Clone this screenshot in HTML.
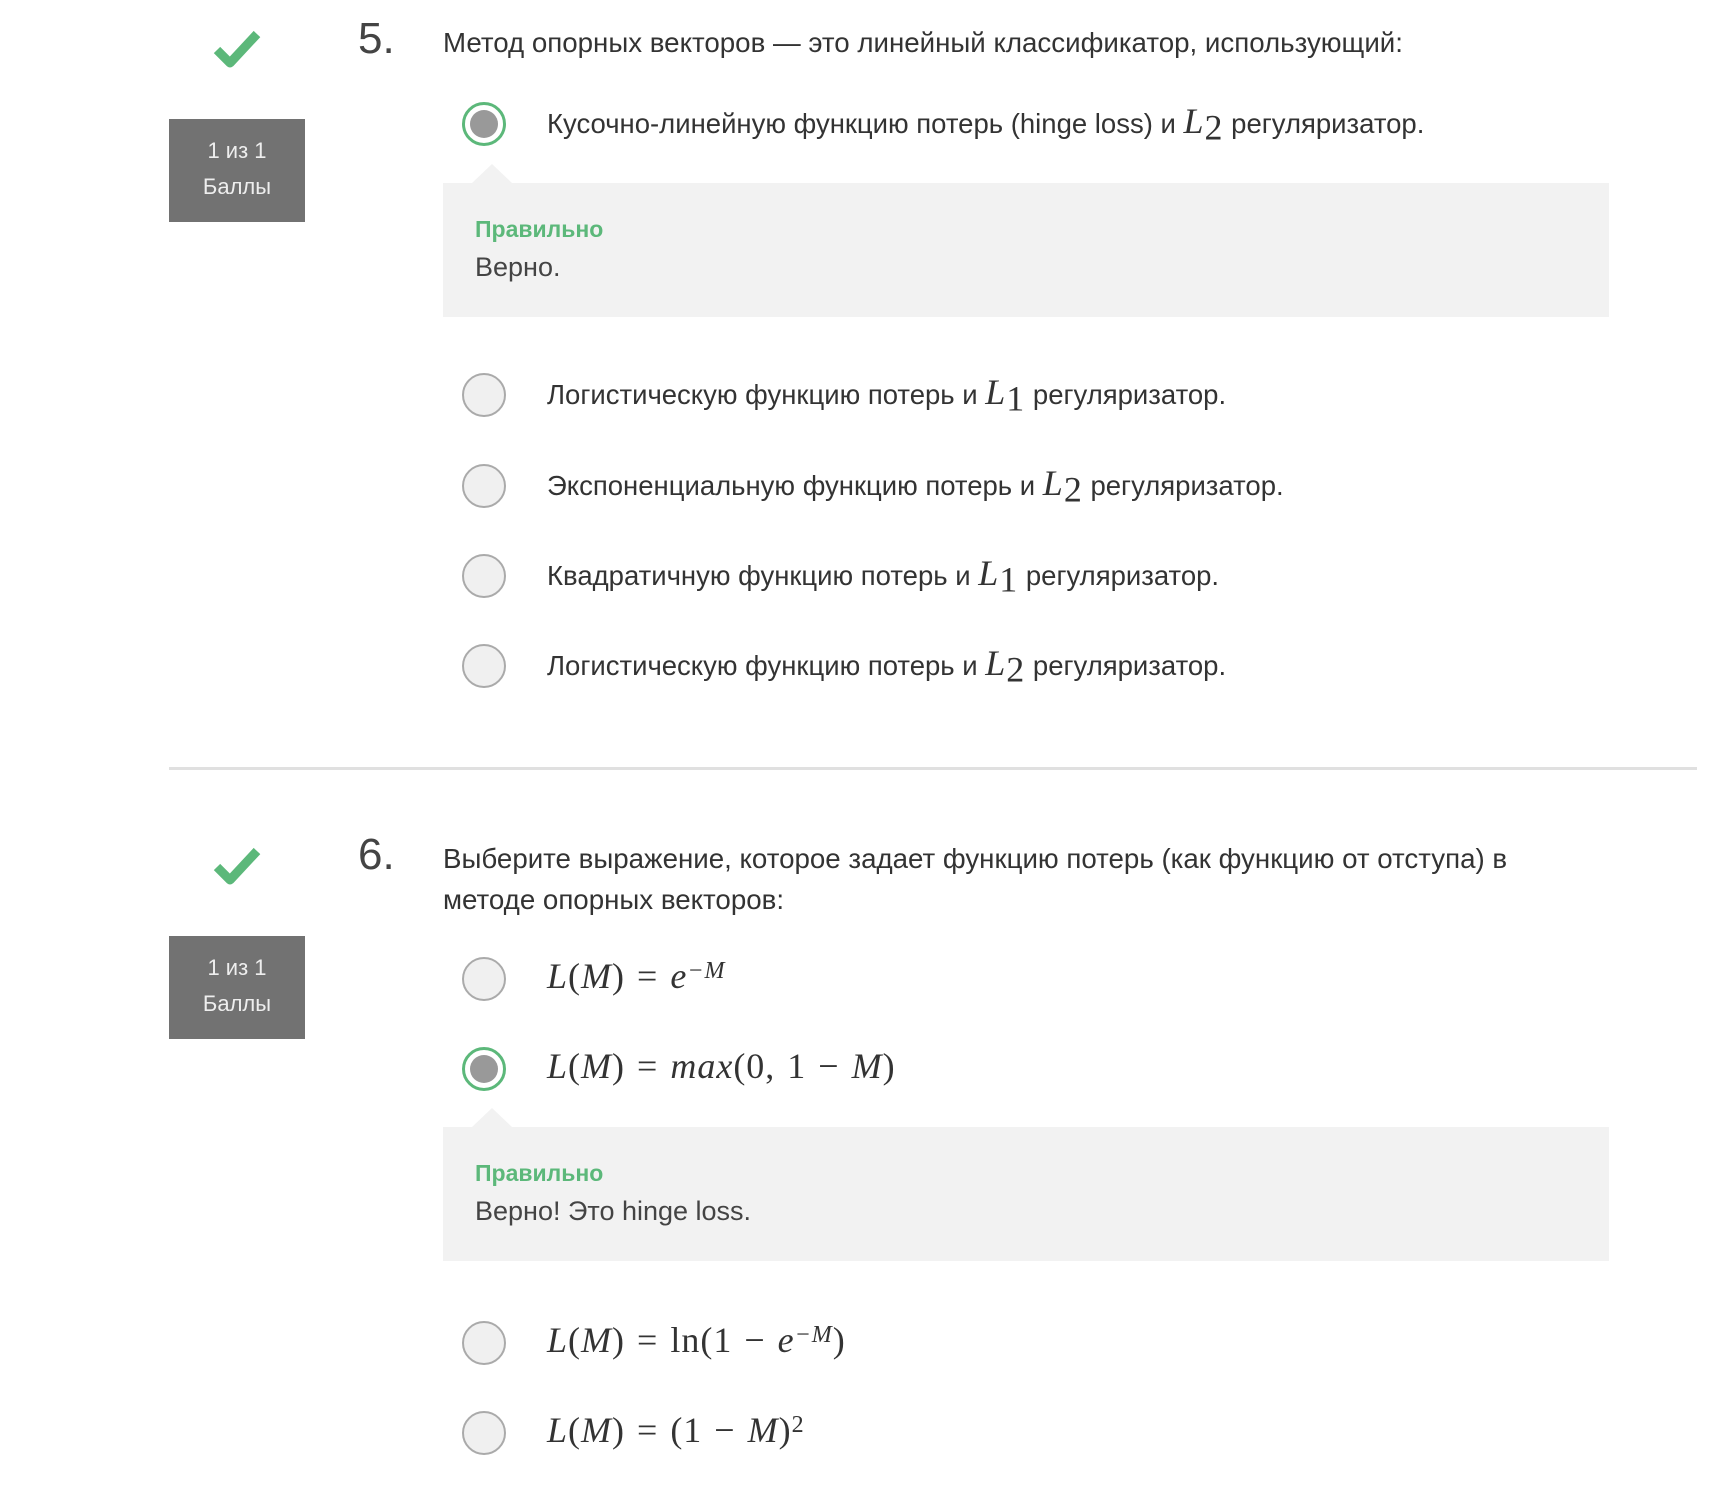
<!DOCTYPE html>
<html><head><meta charset="utf-8"><style>
body{margin:0;width:1730px;height:1498px;background:#fff;position:relative;overflow:hidden;font-family:"Liberation Sans","DejaVu Sans",sans-serif;color:#333}
.score{position:absolute;left:169px;width:136px;height:103px;background:#727272;color:#eee;font-size:22px;text-align:center;line-height:36px;padding-top:14px;box-sizing:border-box}
.num{position:absolute;left:358px;font-size:44px;font-weight:300;color:#444}
.q{position:absolute;left:443px;font-size:27.7px;line-height:41px;color:#333;white-space:nowrap}
.r{position:absolute;left:462px;width:44px;height:44px;border-radius:50%;background:#f0f0f0;border:2px solid #aaa;box-sizing:border-box}
.r.s{border:3px solid #5cb87a;background:#fff}
.r.s:after{content:"";position:absolute;left:5px;top:5px;width:28px;height:28px;border-radius:50%;background:#999}
.t{position:absolute;left:547px;font-size:27.5px;line-height:40px;color:#333;white-space:nowrap}
.m{font-family:"Liberation Serif","DejaVu Serif",serif;font-style:italic;font-size:36px;line-height:0}
.mr{font-family:"Liberation Serif","DejaVu Serif",serif;font-size:36px;line-height:0}
.t .m,.t .mr{letter-spacing:1px}
.mm .mr{word-spacing:2px}
sub,sup{font-size:22px;line-height:0}
.fb{position:absolute;left:443px;width:1166px;height:134px;background:#f2f2f2}
.fb:before{content:"";position:absolute;left:29px;top:-19px;border-left:20px solid transparent;border-right:20px solid transparent;border-bottom:19px solid #f2f2f2}
.ok{position:absolute;left:32px;top:33px;font-size:23px;font-weight:bold;color:#5cb87a}
.fbt{position:absolute;left:32px;top:69px;font-size:27px;color:#444}
.chk{position:absolute;left:213px}
</style></head><body>
<svg class="chk" style="top:28px" width="48" height="40" viewBox="0 0 48 40"><path d="M4 22 L17 35 L44 6" stroke="#5cb87a" stroke-width="9" fill="none" stroke-linejoin="round"/></svg>
<div class="score" style="top:119px">1 из 1<br>Баллы</div>
<div class="num" style="top:14px">5.</div>
<div class="q" style="top:22px">Метод опорных векторов — это линейный классификатор, использующий:</div>
<div class="r s" style="top:102px"></div>
<div class="t" style="top:104px">Кусочно-линейную функцию потерь (hinge loss) и <span class="m">L</span><sub class="mr">2</sub> регуляризатор.</div>
<div class="fb" style="top:183px"><div class="ok">Правильно</div><div class="fbt">Верно.</div></div>
<div class="r" style="top:373px"></div>
<div class="t" style="top:375px">Логистическую функцию потерь и <span class="m">L</span><sub class="mr">1</sub> регуляризатор.</div>
<div class="r" style="top:464px"></div>
<div class="t" style="top:466px">Экспоненциальную функцию потерь и <span class="m">L</span><sub class="mr">2</sub> регуляризатор.</div>
<div class="r" style="top:554px"></div>
<div class="t" style="top:556px">Квадратичную функцию потерь и <span class="m">L</span><sub class="mr">1</sub> регуляризатор.</div>
<div class="r" style="top:644px"></div>
<div class="t" style="top:646px">Логистическую функцию потерь и <span class="m">L</span><sub class="mr">2</sub> регуляризатор.</div>
<div style="position:absolute;left:169px;top:767px;width:1528px;height:3px;background:#e0e0e0"></div>
<svg class="chk" style="top:845px" width="48" height="40" viewBox="0 0 48 40"><path d="M4 22 L17 35 L44 6" stroke="#5cb87a" stroke-width="9" fill="none" stroke-linejoin="round"/></svg>
<div class="score" style="top:936px">1 из 1<br>Баллы</div>
<div class="num" style="top:830px">6.</div>
<div class="q" style="top:838px">Выберите выражение, которое задает функцию потерь (как функцию от отступа) в<br>методе опорных векторов:</div>
<div class="r" style="top:957px"></div>
<div class="t mm" style="top:959px"><span class="m">L</span><span class="mr">(</span><span class="m">M</span><span class="mr">) = </span><span class="m">e</span><sup class="m" style="font-size:24px">−M</sup></div>
<div class="r s" style="top:1047px"></div>
<div class="t mm" style="top:1049px"><span class="m">L</span><span class="mr">(</span><span class="m">M</span><span class="mr">) = </span><span class="m">max</span><span class="mr">(0, 1 − </span><span class="m">M</span><span class="mr">)</span></div>
<div class="fb" style="top:1127px"><div class="ok">Правильно</div><div class="fbt">Верно! Это hinge loss.</div></div>
<div class="r" style="top:1321px"></div>
<div class="t mm" style="top:1323px"><span class="m">L</span><span class="mr">(</span><span class="m">M</span><span class="mr">) = ln(1 − </span><span class="m">e</span><sup class="m" style="font-size:24px">−M</sup><span class="mr">)</span></div>
<div class="r" style="top:1411px"></div>
<div class="t mm" style="top:1413px"><span class="m">L</span><span class="mr">(</span><span class="m">M</span><span class="mr">) = (1 − </span><span class="m">M</span><span class="mr">)</span><sup class="mr" style="font-size:24px">2</sup></div>
</body></html>
